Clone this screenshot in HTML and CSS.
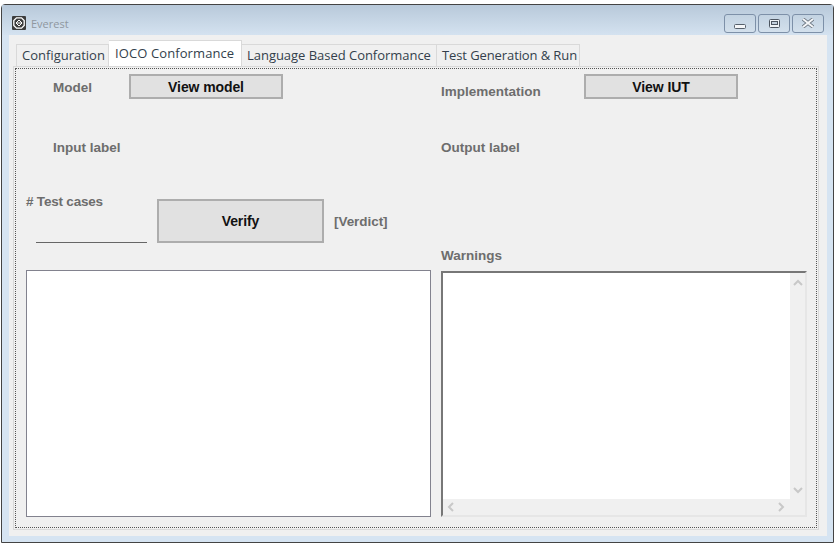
FILE: index.html
```html
<!DOCTYPE html>
<html lang="en">
<head>
    <meta charset="UTF-8">
    <title>Everest</title>
    <link rel="stylesheet" href="styles.css">
</head>
<body>
    <div class="window">
        <div class="titlebar">
            <svg class="app-icon" width="14" height="14" viewBox="0 0 14 14">
                <rect width="14" height="14" rx="1" fill="#3c3c3c"/>
                <path d="M4.5 1.8h5L12.2 4.5v5L9.5 12.2h-5L1.8 9.5v-5z" fill="none" stroke="#fff" stroke-width="1.3"/>
                <path d="M7 4L10 7 7 10 4 7z" fill="#3c3c3c" stroke="#fff"/>
                <path d="M4 7h6" stroke="#fff"/>
            </svg>
            <span class="app-title">Everest</span>
            <div class="caption-buttons">
                <div class="caption-btn btn-min">
                    <svg width="12" height="5" viewBox="0 0 12 5"><rect x="0.5" y="0.5" width="11" height="4" rx="1" fill="#f4f6f8" stroke="#56606c"/></svg>
                </div>
                <div class="caption-btn">
                    <svg width="11" height="9" viewBox="0 0 11 9"><rect x="0.5" y="0.5" width="10" height="8" rx="1" fill="#eef2f6" stroke="#4c5560"/><rect x="2.5" y="2.5" width="6" height="3" fill="#c3d0dd" stroke="#4c5560"/></svg>
                </div>
                <div class="caption-btn">
                    <svg width="14" height="10" viewBox="0 0 14 10"><path d="M2 1l10 8M12 1L2 9" stroke="#6b7580" stroke-width="3.6"/><path d="M2 1l10 8M12 1L2 9" stroke="#f4f6f8" stroke-width="2"/></svg>
                </div>
            </div>
        </div>
        <div class="client">
            <div class="tabs">
                <div class="tab">Configuration</div>
                <div class="tab active">IOCO Conformance</div>
                <div class="tab tab-lang">Language Based Conformance</div>
                <div class="tab tab-test">Test Generation &amp; Run</div>
            </div>
            <div class="pane">
                <div class="page">
                    <div class="col">
                        <div class="row-model">
                            <span class="label label-model">Model</span>
                            <button class="btn btn-view">View model</button>
                        </div>
                        <div class="label label-input">Input label</div>
                        <div class="row-test">
                            <div class="test-cases">
                                <span class="label label-cases">&#35; Test cases</span>
                                <div class="test-input"></div>
                            </div>
                            <button class="btn btn-verify">Verify</button>
                            <span class="label label-verdict">[Verdict]</span>
                        </div>
                        <div class="output-box"></div>
                    </div>
                    <div class="col">
                        <div class="row-impl">
                            <span class="label label-impl">Implementation</span>
                            <button class="btn btn-view">View IUT</button>
                        </div>
                        <div class="label label-output">Output label</div>
                        <div class="label label-warn">Warnings</div>
                        <div class="warn-box">
                            <div class="warn-text"></div>
                            <div class="scroll-v">
                                <svg width="10" height="7" viewBox="0 0 10 7"><path d="M1 6l4-4 4 4" fill="none" stroke="#c8c8c8" stroke-width="2"/></svg>
                                <svg width="10" height="7" viewBox="0 0 10 7"><path d="M1 1l4 4 4-4" fill="none" stroke="#c8c8c8" stroke-width="2"/></svg>
                            </div>
                            <div class="scroll-h">
                                <svg width="7" height="10" viewBox="0 0 7 10"><path d="M6 1L2 5l4 4" fill="none" stroke="#c8c8c8" stroke-width="2"/></svg>
                                <svg width="7" height="10" viewBox="0 0 7 10"><path d="M1 1l4 4-4 4" fill="none" stroke="#c8c8c8" stroke-width="2"/></svg>
                            </div>
                            <div class="scroll-corner"></div>
                        </div>
                    </div>
                </div>
            </div>
        </div>
    </div>
</body>
</html>
```
FILE: styles.css
```css
html, body { margin: 0; padding: 0; background-color: #fff; }
body { width: 838px; height: 547px; overflow: hidden; font-family: "Liberation Sans", Arial, sans-serif; }
.window { box-sizing: border-box; width: 833px; height: 539px; margin: 4px 0 0 1px; display: flex; flex-direction: column; background-color: #d6e4f2; border: 1px solid #444; border-radius: 4px 4px 0 0; }
.titlebar { box-sizing: border-box; height: 30px; flex: none; display: flex; align-items: center; padding: 6px 9px 0 10px; background: linear-gradient(#b8c9da, #d4e2f0); }
.app-icon { margin-right: 5px; }
.app-title { font-family: "Open Sans", sans-serif; font-size: 11px; color: #8f979f; }
.caption-buttons { margin-left: auto; display: flex; gap: 2px; }
.caption-btn { box-sizing: border-box; width: 32px; height: 19px; display: flex; align-items: center; justify-content: center; border: 1px solid #7d90a8; border-radius: 3px; background: linear-gradient(#c3d3e2, #d3e0ec); }
.btn-min { align-items: flex-end; padding-bottom: 3px; }
.client { flex: 1; margin: 0 6px 6px 7px; background-color: #f0f0f0; padding: 6px 8px 6px 4px; display: flex; flex-direction: column; }
.tabs { display: flex; align-items: flex-end; height: 25px; padding-left: 3px; flex: none; }
.tab { box-sizing: border-box; height: 22px; padding: 0 3px 0 5px; font-family: "Open Sans", sans-serif; font-size: 13px; line-height: 21px; color: #333f4c; white-space: nowrap; border: 1px solid #d9d9d9; border-bottom: none; border-left: none; }
.tab:first-child { border-left: 1px solid #d9d9d9; width: 93px; }
.tab.active { height: 26px; width: 133px; background-color: #fff; padding-left: 6px; line-height: 25px; letter-spacing: 0.1px; }
.tab-lang { width: 195px; letter-spacing: -0.03px; }
.tab-test { width: 143px; letter-spacing: -0.1px; }
.pane { flex: 1; border: 1px solid #d9d9d9; padding: 1px; background-color: #f0f0f0; }
.page { box-sizing: border-box; height: 100%; border: 1px dotted #555; padding: 5px 10px 10px 10px; display: grid; grid-template-columns: 405px 366px; column-gap: 10px; }
.col { display: flex; flex-direction: column; }
.label { font-size: 13.5px; font-weight: bold; color: #6d6d6d; line-height: 16px; }
.btn { box-sizing: border-box; font-family: inherit; font-size: 14px; font-weight: bold; letter-spacing: -0.1px; color: #111; background-color: #e1e1e1; border: 2px solid #adadad; padding: 0; }
.btn-view { width: 154px; height: 25px; }
.row-model { display: flex; align-items: flex-start; padding-left: 27px; height: 25px; }
.label-model { width: 76px; margin-top: 6px; }
.label-input { margin: 41px 0 0 27px; }
.row-test { display: flex; margin-top: 43px; height: 44px; }
.test-cases { width: 131px; display: flex; flex-direction: column; }
.label-cases { margin-top: -5px; letter-spacing: -0.2px; }
.test-input { width: 111px; margin: 31px 0 0 10px; border-bottom: 1px solid #666; height: 1px; }
.btn-verify { width: 167px; height: 44px; }
.label-verdict { margin: 15px 0 0 10px; letter-spacing: -0.05px; }
.output-box { box-sizing: border-box; height: 247px; margin-top: 27px; background-color: #fff; border: 1px solid #82828e; }
.row-impl { display: flex; align-items: flex-start; height: 25px; }
.label-impl { width: 143px; margin-top: 10px; }
.label-output { margin-top: 41px; }
.label-warn { margin-top: 92px; }
.warn-box { box-sizing: border-box; height: 246px; margin-top: 7px; display: grid; grid-template-columns: 1fr 15px; grid-template-rows: 1fr 16px; background-color: #f0f0f0; border: 2px solid #e6e6e6; border-top-color: #777; border-left-color: #777; }
.warn-text { background-color: #fff; }
.scroll-v { display: flex; flex-direction: column; align-items: center; justify-content: space-between; padding: 6px 0 5px; }
.scroll-h { display: flex; align-items: center; justify-content: space-between; padding: 0 5px 0 4px; }
```
